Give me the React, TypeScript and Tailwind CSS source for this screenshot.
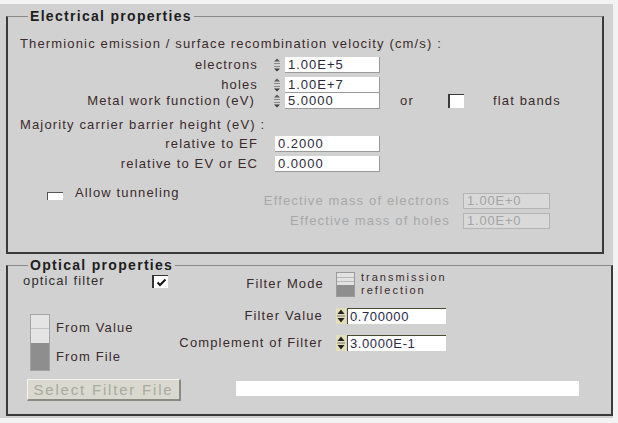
import React from "react";

const SpinGray = () => (
  <svg width="10" height="16" viewBox="0 0 10 16" className="shrink-0">
    <path d="M5 1.5 L8 4.5 H2 Z" fill="#5a5a5a" />
    <line x1="2" y1="6.5" x2="8" y2="6.5" stroke="#8a8a8a" strokeWidth="1" />
    <line x1="2" y1="9.5" x2="8" y2="9.5" stroke="#8a8a8a" strokeWidth="1" />
    <path d="M2 11.5 H8 L5 14.5 Z" fill="#3a3a3a" />
  </svg>
);

const SpinYellow = () => (
  <svg width="10" height="16" viewBox="0 0 10 16" className="shrink-0">
    <rect x="0" y="0" width="10" height="16" fill="#e4dfb8" />
    <path d="M5 1.5 L8.5 6 H1.5 Z" fill="#222" />
    <line x1="1" y1="8" x2="9" y2="8" stroke="#777" strokeWidth="1" />
    <path d="M1.5 10 H8.5 L5 14.5 Z" fill="#222" />
  </svg>
);

function Field({ value, w }: { value: string; w: string }) {
  return (
    <div
      className={`${w} h-[16px] bg-white border-r border-b border-[#9a9a9a] pl-[3px] leading-[15px] text-[13px] text-[#2a2a3a] tracking-[1px]`}
    >
      {value}
    </div>
  );
}

export default function App() {
  return (
    <div className="w-[618px] h-[423px] bg-[#f3f3f3] overflow-hidden font-['Liberation_Sans',Arial,sans-serif] text-[13px] leading-[16px] tracking-[1.15px] text-[#3b2b2b]">
      <div className="mt-[4px] w-[613px] h-[414px] bg-[#d1d1d1] pt-[12px] pl-[6px] flex flex-col">
        {/* Electrical properties */}
        <div className="w-[598px] h-[238px] shrink-0 border-l-2 border-r-2 border-b-2 border-[#3a3a3a] border-t border-t-[#8a8a8a] flex flex-col">
          <div className="-mt-[8px] ml-[20px] px-[2px] w-fit h-[14px] leading-[14px] bg-[#d1d1d1] font-bold text-[14px] tracking-[1.3px] text-[#1e1e1e]">
            Electrical properties
          </div>
          <div className="mt-[13px] pl-[12px] h-[16px] whitespace-nowrap">
            Thermionic emission / surface recombination velocity (cm/s) :
          </div>

          <div className="mt-[5px] flex items-center h-[16px]">
            <div className="w-[250px] text-right">electrons</div>
            <div className="ml-[14px]"><SpinGray /></div>
            <div className="ml-[3px]"><Field value="1.00E+5" w="w-[95px]" /></div>
          </div>
          <div className="mt-[4px] flex items-center h-[16px]">
            <div className="w-[250px] text-right">holes</div>
            <div className="ml-[14px]"><SpinGray /></div>
            <div className="ml-[3px]"><Field value="1.00E+7" w="w-[95px]" /></div>
          </div>
          <div className="flex items-center h-[16px]">
            <div className="w-[250px] text-right pr-[3px] whitespace-nowrap">Metal work function (eV)</div>
            <div className="ml-[14px]"><SpinGray /></div>
            <div className="ml-[3px]"><Field value="5.0000" w="w-[95px]" /></div>
            <div className="ml-[20px] w-[48px]">or</div>
            <div className="w-[16px] h-[14px] bg-white border-l-2 border-t border-[#3a3a3a]" />
            <div className="ml-[29px] whitespace-nowrap">flat bands</div>
          </div>

          <div className="mt-[8px] pl-[12px] h-[16px] whitespace-nowrap">
            Majority carrier barrier height (eV) :
          </div>
          <div className="mt-[3px] flex items-center h-[16px]">
            <div className="w-[250px] text-right whitespace-nowrap">relative to EF</div>
            <div className="ml-[17px]"><Field value="0.2000" w="w-[105px]" /></div>
          </div>
          <div className="mt-[4px] flex items-center h-[16px]">
            <div className="w-[250px] text-right whitespace-nowrap">relative to EV or EC</div>
            <div className="ml-[17px]"><Field value="0.0000" w="w-[105px]" /></div>
          </div>

          <div className="mt-[13px] flex items-start">
            <div className="w-[200px] flex items-start">
              <div className="ml-[39px] mt-[7px] w-[16px] h-[8px] bg-white border-l border-t border-[#555]" />
              <div className="ml-[12px] whitespace-nowrap">Allow tunneling</div>
            </div>
            <div className="flex flex-col">
              <div className="mt-[8px] flex items-center h-[16px]">
                <div className="w-[242px] text-right text-[#a8a8a8] whitespace-nowrap">Effective mass of electrons</div>
                <div className="ml-[13px] w-[87px] h-[16px] bg-[#d9d9d9] border border-[#b4b4b4] pl-[3px] leading-[14px] text-[#a4a4a4] tracking-[0.8px]">1.00E+0</div>
              </div>
              <div className="mt-[4px] flex items-center h-[16px]">
                <div className="w-[242px] text-right text-[#a8a8a8] whitespace-nowrap">Effective mass of holes</div>
                <div className="ml-[13px] w-[87px] h-[16px] bg-[#d9d9d9] border border-[#b4b4b4] pl-[3px] leading-[14px] text-[#a4a4a4] tracking-[0.8px]">1.00E+0</div>
              </div>
            </div>
          </div>
        </div>

        {/* Optical properties */}
        <div className="mt-[11px] w-[607px] h-[151px] shrink-0 border-l-2 border-r-2 border-b-2 border-[#3a3a3a] border-t border-t-[#8a8a8a] flex flex-col">
          <div className="-mt-[8px] ml-[20px] px-[2px] w-fit h-[14px] leading-[14px] bg-[#d1d1d1] font-bold text-[14px] tracking-[1.3px] text-[#1e1e1e]">
            Optical properties
          </div>

          <div className="flex items-start">
            <div className="ml-[15px] mt-[1px] w-[129px] h-[16px] leading-[16px] whitespace-nowrap text-[#2e2e2e]">optical filter</div>
            <div className="mt-[3px] w-[16px] h-[13px] bg-white border-l-2 border-t border-[#333] flex items-center justify-center">
              <svg width="11" height="9" viewBox="0 0 11 9">
                <polyline points="1.5,4.5 4,7 9.5,1.5" fill="none" stroke="#111" strokeWidth="2" />
              </svg>
            </div>
            <div className="mt-[4px] w-[156px] text-right whitespace-nowrap">Filter Mode</div>
            <div className="ml-[12px] w-[19px] h-[25px] border border-[#9a9a9a] flex flex-col">
              <div className="h-[12px] bg-[#e2e2e2] flex flex-col justify-center gap-[3px]">
                <div className="h-px bg-[#b8b8b8]" />
                <div className="h-px bg-[#b8b8b8]" />
              </div>
              <div className="flex-1 bg-[#8e8e8e]" />
            </div>
            <div className="ml-[6px] -mt-[1px] flex flex-col text-[11px] leading-[13px] tracking-[2px] whitespace-nowrap">
              <div>transmission</div>
              <div>reflection</div>
            </div>
          </div>

          <div className="mt-[3px] flex items-start">
            <div className="w-[162px] flex items-start">
              <div className="ml-[22px] mt-[14px] w-[20px] h-[57px] border border-[#a4a4a4] flex flex-col">
                <div className="h-[14px] bg-[#e4e4e4] border-b border-[#c4c4c4]" />
                <div className="h-[14px] bg-[#e4e4e4]" />
                <div className="flex-1 bg-[#8e8e8e]" />
              </div>
              <div className="ml-[6px] flex flex-col whitespace-nowrap">
                <div className="mt-[20px]">From Value</div>
                <div className="mt-[13px]">From File</div>
              </div>
            </div>
            <div className="flex flex-col">
              <div className="mt-[8px] flex items-center h-[16px]">
                <div className="w-[153px] text-right whitespace-nowrap">Filter Value</div>
                <div className="ml-[13px]"><SpinYellow /></div>
                <div className="ml-[1px] w-[99px] h-[16px] bg-white border-l border-t border-[#4a4a30] pl-[2px] leading-[15px] text-[#2a2a4a] tracking-[0.6px]">0.700000</div>
              </div>
              <div className="mt-[11px] flex items-center h-[16px]">
                <div className="w-[153px] text-right whitespace-nowrap">Complement of Filter</div>
                <div className="ml-[13px]"><SpinYellow /></div>
                <div className="ml-[1px] w-[99px] h-[16px] bg-white border-l border-t border-[#4a4a30] pl-[2px] leading-[15px] text-[#2a2a4a] tracking-[0.6px]">3.0000E-1</div>
              </div>
            </div>
          </div>

          <div className="mt-[8px] flex items-start">
            <div className="ml-[19px] w-[154px] h-[22px] bg-[#d9d9cf] border-t border-l border-t-[#f4f4f0] border-l-[#f4f4f0] border-b-2 border-r-2 border-b-[#8a8a84] border-r-[#8a8a84] flex items-center justify-center text-[15px] tracking-[1.8px] text-[#a9a9a0] whitespace-nowrap">
              Select Filter File
            </div>
            <div className="ml-[55px] mt-[2px] w-[343px] h-[15px] bg-white" />
          </div>
        </div>
      </div>
    </div>
  );
}
